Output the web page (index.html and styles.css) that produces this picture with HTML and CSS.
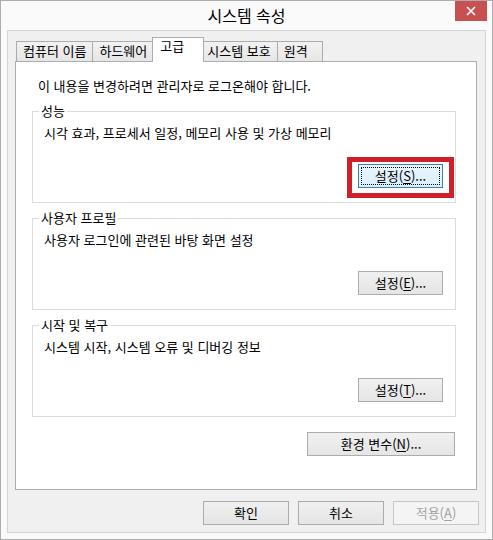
FILE: index.html
```html
<!DOCTYPE html>
<html lang="ko">
<head>
    <meta charset="UTF-8">
    <meta name="viewport" content="width=device-width, initial-scale=1.0">
    <title>시스템 속성</title>
    <link rel="stylesheet" href="styles.css">
</head>
<body>
    <div class="window">
        <div class="titlebar">
            <span></span>
            <span class="title">시스템 속성</span>
            <button class="close" type="button" aria-label="닫기">
                <svg width="10" height="10" viewBox="0 0 10 10">
                    <path d="M1 1 L9 9 M9 1 L1 9" stroke="#fff" stroke-width="1.6" fill="none"/>
                </svg>
            </button>
        </div>

        <div class="client">
            <div class="tabs">
                <div class="tab">컴퓨터 이름</div>
                <div class="tab">하드웨어</div>
                <div class="tab active">고급</div>
                <div class="tab">시스템 보호</div>
                <div class="tab">원격</div>
            </div>

            <div class="panel">
                <p class="note">이 내용을 변경하려면 관리자로 로그온해야 합니다.</p>

                <fieldset class="group">
                    <legend>성능</legend>
                    <p class="desc">시각 효과, 프로세서 일정, 메모리 사용 및 가상 메모리</p>
                    <div class="group-actions">
                        <span class="highlight">
                            <button class="btn focused" type="button">설정(<u>S</u>)...</button>
                        </span>
                    </div>
                </fieldset>

                <fieldset class="group">
                    <legend>사용자 프로필</legend>
                    <p class="desc">사용자 로그인에 관련된 바탕 화면 설정</p>
                    <div class="group-actions">
                        <button class="btn" type="button">설정(<u>E</u>)...</button>
                    </div>
                </fieldset>

                <fieldset class="group">
                    <legend>시작 및 복구</legend>
                    <p class="desc">시스템 시작, 시스템 오류 및 디버깅 정보</p>
                    <div class="group-actions">
                        <button class="btn" type="button">설정(<u>T</u>)...</button>
                    </div>
                </fieldset>

                <div class="panel-actions">
                    <button class="btn wide" type="button">환경 변수(<u>N</u>)...</button>
                </div>
            </div>

            <div class="dialog-buttons">
                <button class="btn dlg" type="button">확인</button>
                <button class="btn dlg" type="button">취소</button>
                <button class="btn dlg" type="button" disabled>적용(<u>A</u>)</button>
            </div>
        </div>
    </div>
</body>
</html>
```

FILE: styles.css
```css
body {
    margin: 0;
    background-color: #ffffff;
    font-family: "Noto Sans CJK KR", "Noto Sans", sans-serif;
    font-size: 13px;
    line-height: 16px;
    color: #000;
}
.window {
    box-sizing: border-box;
    width: 493px;
    height: 540px;
    border: 1px solid #adadad;
    background-color: #fafafa;
    padding: 0 6px 6px;
    display: flex;
    flex-direction: column;
}
.titlebar {
    height: 29px;
    display: grid;
    grid-template-columns: 1fr auto 1fr;
    align-items: center;
}
.title {
    font-size: 16px;
    line-height: 20px;
    color: #000;
    margin-top: -1px;
}
.close {
    justify-self: end;
    align-self: start;
    width: 32px;
    height: 20px;
    margin-right: -1px;
    border: none;
    padding: 0;
    background-color: #c75050;
    display: flex;
    align-items: center;
    justify-content: center;
}
.client {
    flex: 1;
    border: 1px solid #d4d4d4;
    background-color: #f0f0f0;
    padding: 6px 8px 7px 7px;
    display: flex;
    flex-direction: column;
}
.tabs {
    display: flex;
    align-items: flex-end;
    padding-left: 1px;
    position: relative;
    z-index: 1;
}
.tab {
    box-sizing: border-box;
    height: 20px;
    min-width: 46px;
    padding: 1px 6px 0 6px;
    border: 1px solid #acacac;
    border-bottom: none;
    margin-left: -1px;
    background: linear-gradient(#f2f2f2, #e6e6e6);
    white-space: nowrap;
}
.tab:first-child {
    margin-left: 0;
}
.tab.active {
    height: 25px;
    min-width: 52px;
    padding: 0 6px 0 7px;
    margin: 0 -3px -1px -2px;
    background: #ffffff;
    position: relative;
}
.panel {
    box-sizing: border-box;
    height: 429px;
    border: 1px solid #adadad;
    background-color: #ffffff;
    padding: 16px 20px 0 16px;
}
.note {
    margin: 0 0 0 6px;
}
.group {
    margin: 9px 0 0 0;
    padding: 0 12px 14px 6px;
    border: 1px solid #dcdcdc;
    min-width: 0;
}
.group + .group {
    margin-top: 7px;
}
.group legend {
    padding: 0 2px;
    line-height: 16px;
}
.desc {
    margin: 6px 0 0 5px;
}
.group-actions {
    display: flex;
    justify-content: flex-end;
    margin-top: 23px;
}
.btn {
    box-sizing: border-box;
    width: 85px;
    height: 24px;
    padding: 0;
    border: 1px solid #acacac;
    background: linear-gradient(#f0f0f0, #e5e5e5);
    font-family: inherit;
    font-size: 13px;
    line-height: 16px;
    color: #000;
}
.btn u {
    text-underline-offset: 2px;
}
.btn.focused {
    border-color: #3c7fb1;
    background: linear-gradient(#eaf6fd, #d9f0fc);
    outline: 1px dotted #000;
    outline-offset: -4px;
}
.btn.wide {
    width: 148px;
}
.btn.dlg {
    width: 86px;
}
.btn:disabled {
    border-color: #c6c6c6;
    background: #f4f4f4;
    color: #a3a3a3;
}
.highlight {
    position: relative;
    display: flex;
}
.highlight::after {
    content: "";
    position: absolute;
    left: -11px;
    right: -11px;
    top: -7px;
    bottom: -10px;
    border: 5px solid #d01f2b;
}
.panel-actions {
    display: flex;
    justify-content: flex-end;
    margin-top: 15px;
    padding-right: 1px;
}
.dialog-buttons {
    display: flex;
    justify-content: flex-end;
    gap: 9px;
    margin-top: 11px;
    margin-right: -2px;
}
```
